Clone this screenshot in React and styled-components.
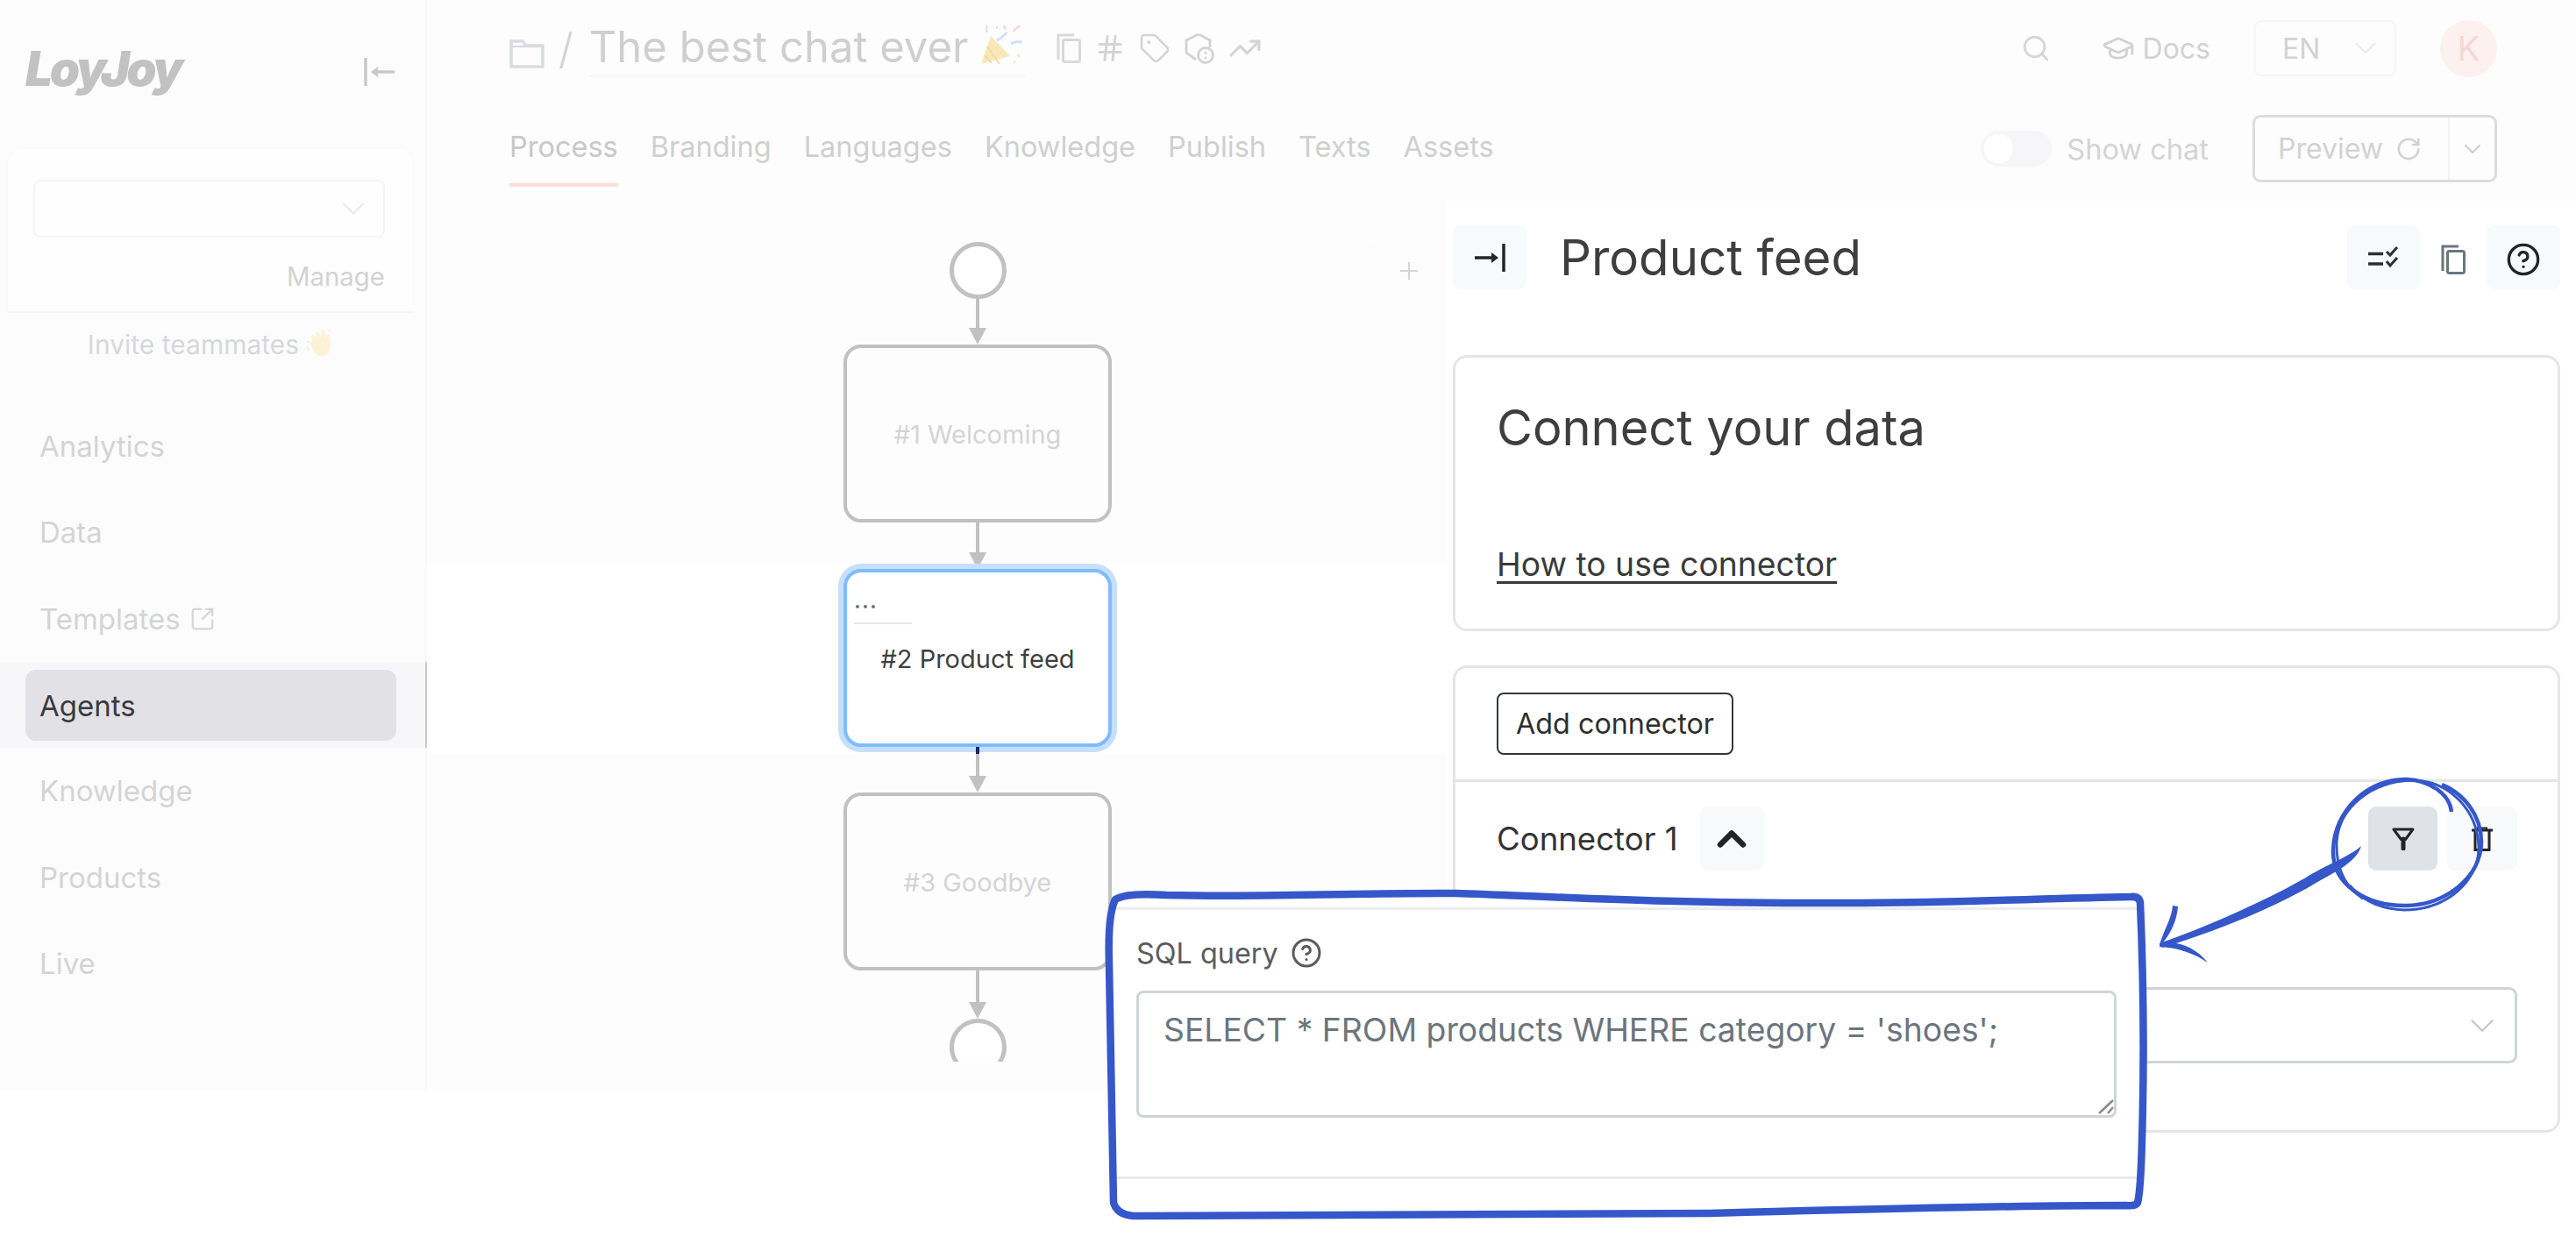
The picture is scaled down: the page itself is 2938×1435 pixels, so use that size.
import React from "react";
import styled, { createGlobalStyle } from "styled-components";
import { Search, GraduationCap, RotateCw, CircleHelp, ChevronDown, ChevronUp, Hash, Tag, TrendingUp, SquareArrowOutUpRight, Plus } from "lucide-react";

const Global = createGlobalStyle`
  html, body { margin: 0; padding: 0; background: #fff; }
  body { font-family: "Inter", "Noto Sans", sans-serif; }
  * { box-sizing: border-box; }
`;

const Page = styled.div`
  position: relative; width: 2938px; height: 1435px; display: flex; overflow: hidden; background: #fff;
`;
const Sidebar = styled.aside`
  width: 487px; height: 1245px; flex: none; background: #fcfcfd; border-right: 2px solid #f8f8f9;
  display: flex; flex-direction: column;
`;
const LogoRow = styled.div`
  height: 169px; display: flex; align-items: flex-start; justify-content: space-between; padding: 48px 34px 0 29px;
`;
const Logo = styled.div`
  font: italic 900 55px/60px "Inter", sans-serif; letter-spacing: -3.4px; color: #c2c2c2;
`;
const CollapseBtn = styled.div` margin-top: 17px; display: flex; `;
const WorkspaceCard = styled.div`
  margin: 0 13px 0 8px; height: 188px; padding: 35px 32px 0 29px; background: #fefefe;
  border: 1px solid #fafafa; border-radius: 18px 18px 0 0; border-bottom: 2px solid #f6f6f6;
`;
const WorkspaceSelect = styled.div`
  height: 66px; border: 2px solid #f5f5f6; border-radius: 8px; display: flex; align-items: center; justify-content: flex-end; padding-right: 12px; color: #e8e8ea;
`;
const ManageLink = styled.div`
  margin-top: 25px; text-align: right; font-size: 29.4px; line-height: 40px; color: #d2d2d2;
`;
const InviteRow = styled.div`
  margin: 0 13px 0 8px; height: 92px; padding-top: 16px; display: flex; justify-content: center; align-items: flex-start; gap: 8px;
  font-size: 30px; line-height: 40px; color: #d6d8da; border-bottom: 1px solid #fafafa;
`;
const Nav = styled.nav` margin-top: 11px; display: flex; flex-direction: column; `;
const NavItem = styled.div`
  height: 98.3px; padding: ${p => (p.$active ? "9px 0 8px 29px" : "0 0 0 45px")}; margin-right: -2px;
  display: flex; align-items: center; gap: 10px; font-size: 33px; color: #d4d4d4;
  ${p => p.$active && "background: #f7f7f9; border-right: 2px solid #c9c9cd;"}
`;
const ActivePill = styled.div`
  width: 423px; height: 81px; background: #e2e2e6; border-radius: 12px; display: flex; align-items: center;
  padding-left: 16px; color: #3a3a3c; font-size: 33px;
`;
const Main = styled.main` flex: 1; display: flex; flex-direction: column; min-width: 0; `;
const Header = styled.header` height: 230px; flex: none; background: #fdfdfd; padding: 0 90px 0 94px; `;
const TopBar = styled.div` height: 110px; display: flex; align-items: center; justify-content: space-between; `;
const Breadcrumb = styled.div` display: flex; align-items: center; `;
const Slash = styled.span` font-size: 48px; color: #d2d2d2; margin: 0 18px 0 16px; font-weight: 300; `;
const ChatTitle = styled.div`
  display: flex; align-items: center; gap: 13px; height: 66px; border-bottom: 2px solid #f6f6f6;
  font-size: 49px; line-height: 60px; color: #cfcfcf; width: 497px; white-space: nowrap;
`;
const TitleTools = styled.div` display: flex; align-items: center; gap: 15px; margin-left: 36px; color: #d4d4d4; `;
const TopRight = styled.div` display: flex; align-items: center; gap: 50px; color: #d6d6d6; `;
const SearchWrap = styled.div` display: flex; margin-right: 8px; `;
const DocsLink = styled.div` display: flex; align-items: center; gap: 9px; font-size: 32px; color: #d2d2d2; `;
const LangSelect = styled.div`
  width: 162px; height: 64px; border: 2px solid #f6f6f7; border-radius: 8px; display: flex; align-items: center; justify-content: space-between;
  padding: 0 12px 0 30px; font-size: 32px; color: #d2d2d2;
`;
const Avatar = styled.div`
  width: 65px; height: 65px; border-radius: 50%; background: #fdf1ef; color: #f6d7d1; display: flex; align-items: center; justify-content: center; font-size: 38px;
`;
const TabsRow = styled.div` height: 120px; padding-top: 21px; display: flex; justify-content: space-between; align-items: flex-start; `;
const Tabs = styled.div` display: flex; gap: 37px; margin-top: 17px; `;
const Tab = styled.div`
  height: 65px; padding-bottom: 21px; font-size: 32.5px; line-height: 40px; color: ${p => (p.$active ? "#c8c8c8" : "#cfcfcf")}; white-space: nowrap;
  border-bottom: 4px solid ${p => (p.$active ? "#ffdcd5" : "transparent")};
`;
const TabsRight = styled.div` display: flex; align-items: center; height: 77px; `;
const Toggle = styled.div`
  width: 81px; height: 41px; border-radius: 21px; background: #f6f6f8; padding: 4px; margin-right: 17px;
`;
const ToggleKnob = styled.div` width: 33px; height: 33px; border-radius: 50%; background: #fff; `;
const ToggleLabel = styled.span` font-size: 32.6px; color: #d4d4d4; margin-right: 50px; `;
const PreviewGroup = styled.div`
  width: 279px; height: 77px; border: 3px solid #dcdcdc; border-radius: 9px; display: flex; align-items: stretch; background: #fdfdfd;
`;
const PreviewBtn = styled.div`
  width: 222px; display: flex; align-items: center; gap: 14px; padding-left: 26px; font-size: 32px; color: #d2d2d2; border-right: 2px solid #f3f3f3;
`;
const PreviewCaret = styled.div` flex: 1; display: flex; align-items: center; justify-content: center; color: #cfcfcf; `;
const Workspace = styled.div` flex: 1; display: flex; min-height: 0; `;
const Canvas = styled.div`
  position: relative; width: 1163px; height: 1015px; flex: none; padding: 46px 0 0 463px; overflow: hidden;
  background: linear-gradient(#fdfdfd 0 413px, #fff 413px 629px, #fdfdfd 629px);
`;
const CanvasInner = styled.div` width: 330px; height: 943px; overflow: hidden; display: flex; flex-direction: column; align-items: center; padding-top: 8px; margin-top: -8px; `;
const EventCircle = styled.div` width: 65px; height: 65px; flex: none; border: 5px solid #c1c1c1; border-radius: 50%; background: #fff; `;
const EdgeSvg = styled.svg` display: block; flex: none; overflow: visible; `;
const Node = styled.div`
  width: 306px; height: 203px; flex: none; border-radius: 20px; border: 4px solid ${p => (p.$selected ? "#7fbcff" : "#c1c1c1")};
  background: ${p => (p.$selected ? "#fff" : "#fdfdfd")};
  ${p => p.$selected && "box-shadow: 0 0 0 6px #c6dfff;"}
  display: flex; flex-direction: column; align-items: center; justify-content: center; padding-top: ${p => (p.$selected ? 0 : 2)}px;
  font-size: 29px; color: ${p => (p.$selected ? "#3f3f3f" : "#d4d4d4")}; white-space: nowrap;
`;
const NodeTools = styled.div`
  align-self: flex-start; width: 66px; margin-left: 8px; height: 24px; border-bottom: 2px solid #e2e5ea; display: flex; gap: 5px; padding: 2px 2px 0; margin-top: -44px; margin-bottom: 22px; align-items: flex-start;
`;
const NodeDot = styled.i` width: 4px; height: 4px; border-radius: 50%; background: #6c757d; display: block; `;
const AddStep = styled.div`
  position: absolute; right: 10px; top: 47px; width: 76px; height: 63px; background: #fcfcfc; color: #d6d6d6; display: flex; align-items: center; justify-content: center; padding-left: 10px;
`;
const Panel = styled.section` flex: 1; min-width: 0; padding: 27px 18px 0 7px; background: #fff; `;
const PanelHead = styled.div` height: 73px; display: flex; align-items: center; `;
const IconBtn = styled.div`
  width: ${p => p.$w || 84}px; height: 73px; flex: none; border-radius: 9px; background: ${p => p.$bg || "#f8f9fa"}; display: flex; align-items: center; justify-content: center; color: #212529; padding-top: ${p => p.$drop || 0}px;
`;
const PanelTitle = styled.h1` margin: 0 0 0 38px; font-size: 56.4px; font-weight: 400; color: #3e3e3e; white-space: nowrap; `;
const PanelTools = styled.div` margin-left: auto; display: flex; align-items: center; gap: 24px; `;
const PlainIcon = styled.div` display: flex; color: #6c757d; margin-top: 4px; `;
const Card = styled.div` border: 3px solid #e5e5e5; border-radius: 16px; background: #fff; `;
const IntroCard = styled(Card)` margin-top: 75px; height: 315px; padding: 50px 47px 0; `;
const IntroTitle = styled.h2` margin: 0; font-size: 56px; line-height: 60px; font-weight: 400; color: #3e3e3e; `;
const HelpLink = styled.a` display: block; margin-top: 102px; font-size: 37.3px; line-height: 48px; color: #3a3a3a; text-decoration: underline; text-underline-offset: 6px; `;
const ConnectorCard = styled(Card)` margin-top: 39px; height: 533px; `;
const AddRow = styled.div` height: 130px; padding: 28px 47px 0; border-bottom: 3px solid #e5e5e5; `;
const OutlineBtn = styled.div`
  width: 270px; height: 71px; border: 2px solid #33373b; border-radius: 8px; display: flex; align-items: center; justify-content: center; font-size: 32.3px; color: #2e2e2e;
`;
const ConnectorRow = styled.div` margin-top: 28px; padding: 0 46px 0 47px; display: flex; align-items: center; `;
const ConnectorName = styled.span` font-size: 36.6px; color: #333; margin-right: 25px; `;
const RowTools = styled.div` margin-left: auto; display: flex; gap: 11px; `;
const FieldSelect = styled.div`
  margin: 133px 46px 0 47px; height: 87px; border: 3px solid #ced4da; border-radius: 9px; display: flex; align-items: center; justify-content: flex-end; padding-right: 14px; color: #c4c8ce;
`;
const SnippetCard = styled.div`
  position: absolute; left: 1270px; top: 1020px; width: 1172px; height: 366px; background: #fff; padding-top: 15px;
`;
const SnippetInner = styled.div`
  height: 310px; border-top: 3px solid #ececee; border-bottom: 3px solid #e9e9ec; padding: 29px 26px 0;
`;
const SnippetLabel = styled.label` height: 40px; display: flex; align-items: center; gap: 14px; font-size: 32.4px; color: #5b5b5b; `;
const SqlArea = styled.textarea`
  display: block; width: 1118px; height: 145px; margin-top: 23px; border: 3px solid #ced4da; border-radius: 8px; padding: 20px 28px 0; resize: none; outline: none;
  font: 400 37.3px/44px "Inter", sans-serif; color: #6c757d; background: #fff;
`;
const Annotation = styled.svg` position: absolute; left: 0; top: 0; pointer-events: none; `;

const Collapse = ({ color, flip }) => (
  <svg width="36" height="34" viewBox="0 0 36 34" style={flip ? { transform: "scaleX(-1)" } : undefined}>
    <path d="M2 1v32" stroke={color} strokeWidth="3.5" />
    <path d="M11 17h24" stroke={color} strokeWidth="3.5" />
    <path d="M8 17l8-6v12z" fill={color} />
  </svg>
);
const Folder = () => (
  <svg width="40" height="35" viewBox="0 0 40 35" fill="none" stroke="#d9dcdf" strokeWidth="3.5" style={{ marginTop: 12 }}>
    <path d="M2 32V3h13l4 5h19v24z" />
    <path d="M2 9h36" strokeWidth="2.5" />
  </svg>
);
const CopyIcon = ({ color, w = 28, h = 34 }) => (
  <svg width={w} height={h} viewBox="0 0 28 34" fill="none" stroke={color} strokeWidth="3">
    <path d="M2 30V2h18" />
    <rect x="7.5" y="7.5" width="19" height="25" rx="2" />
  </svg>
);
const ShieldClock = () => (
  <svg width="36" height="36" viewBox="0 0 36 36" fill="none" stroke="#d4d4d4" strokeWidth="3">
    <path d="M17 2l13 7v8M17 2L3 9v14l11 8" />
    <circle cx="25" cy="26" r="8.5" fill="#fdfdfd" />
    <circle cx="25" cy="23.5" r="1.5" fill="#d4d4d4" stroke="none" />
    <circle cx="25" cy="29" r="1.5" fill="#d4d4d4" stroke="none" />
  </svg>
);
const Popper = () => (
  <svg width="50" height="50" viewBox="0 0 50 50" fill="none" style={{ flex: "none", marginTop: -6 }}>
    <path d="M2 47L13 15l22 23z" fill="#f8e7b8" />
    <path d="M9 27l14 20M6 37l8 9" stroke="#f3d9a4" strokeWidth="2" />
    <path d="M20 20c8-3 10-9 12-9M36 24c3-2 8-3 13-2" stroke="#cfe2f6" strokeWidth="3" />
    <path d="M8 3c3 3-2 5 1 8M28 3l2 5M46 3c-2 4-6 2-7 7" stroke="#f7c9d6" strokeWidth="1.8" />
    <path d="M20 4v3M44 36l1 3M40 44v2" stroke="#f7dcc0" strokeWidth="2" />
  </svg>
);
const Wave = () => (
  <svg width="31" height="32" viewBox="0 0 31 32" fill="none" style={{ flex: "none", marginTop: 2 }}>
    <path d="M7 17L6 9c0-2 3-2 4 0l2 5-1-9c0-2 3-2 4 0l2 7V3c1-2 4-2 4 0l1 9 1-5c1-2 4-1 4 1l1 12c0 7-4 11-10 11-5 0-7-2-9-6l-4-8c-1-2 1-3 3-1z" fill="#fdf1d6" />
    <path d="M1 20l2 5M2 14l1 2M26 1l2 2" stroke="#e8e8e8" strokeWidth="1.5" />
  </svg>
);
const ChecksIcon = () => (
  <svg width="36" height="26" viewBox="0 0 36 26" fill="none" stroke="#2b2f33">
    <path d="M0 8.5h17M0 20h17" strokeWidth="3.5" />
    <path d="M21 6l4 4 8-9M21 17l4 5 8-9" strokeWidth="3" />
  </svg>
);
const FunnelIcon = () => (
  <svg width="26" height="26" viewBox="0 0 26 26" fill="none" stroke="#212529" strokeWidth="3">
    <path d="M2 2h22l-8.5 11.5h-5z" strokeLinejoin="round" />
    <path d="M13 13v11" strokeWidth="5" strokeLinecap="round" />
  </svg>
);
const TrashIcon = () => (
  <svg width="24" height="28" viewBox="0 0 24 28" fill="none" stroke="#212529" strokeWidth="3">
    <path d="M0 4h24" />
    <path d="M7 4V1.5h10V4" strokeWidth="2" />
    <path d="M4 4v22.5h16V4" />
  </svg>
);
const Arrow = ({ height, dark }) => (
  <EdgeSvg width="20" height={height} viewBox={`0 0 20 ${height}`}>
    <path d={`M10 0V${height - 16}`} stroke="#c1c1c1" strokeWidth="4" />
    <path d={`M0 ${height - 19}h20l-10 19z`} fill="#c1c1c1" />
    {dark === "top" && <path d={`M8 0h4v8h-4z`} fill="#0b2a5e" />}
    {dark === "tip" && <path d={`M7 ${height - 6}h6l-3 6z`} fill="#0b2a5e" />}
  </EdgeSvg>
);

const blue = "#3557c9";

export default function App() {
  return (
    <Page>
      <Global />
      <Sidebar>
        <LogoRow>
          <Logo>LoyJoy</Logo>
          <CollapseBtn><Collapse color="#c8c8c8" /></CollapseBtn>
        </LogoRow>
        <WorkspaceCard>
          <WorkspaceSelect><ChevronDown size={44} strokeWidth={1} /></WorkspaceSelect>
          <ManageLink>Manage</ManageLink>
        </WorkspaceCard>
        <InviteRow>Invite teammates <Wave /></InviteRow>
        <Nav>
          <NavItem>Analytics</NavItem>
          <NavItem>Data</NavItem>
          <NavItem>Templates <SquareArrowOutUpRight size={30} strokeWidth={1.8} color="#d6d6d6" /></NavItem>
          <NavItem $active><ActivePill>Agents</ActivePill></NavItem>
          <NavItem>Knowledge</NavItem>
          <NavItem>Products</NavItem>
          <NavItem>Live</NavItem>
        </Nav>
      </Sidebar>
      <Main>
        <Header>
          <TopBar>
            <Breadcrumb>
              <Folder />
              <Slash>/</Slash>
              <ChatTitle>The best chat ever <Popper /></ChatTitle>
              <TitleTools>
                <CopyIcon color="#d8d8d8" />
                <Hash size={36} strokeWidth={2} />
                <Tag size={36} strokeWidth={1.7} />
                <ShieldClock />
                <TrendingUp size={38} strokeWidth={2} />
              </TitleTools>
            </Breadcrumb>
            <TopRight>
              <SearchWrap><Search size={34} strokeWidth={2} /></SearchWrap>
              <DocsLink><GraduationCap size={38} strokeWidth={1.8} />Docs</DocsLink>
              <LangSelect>EN<ChevronDown size={42} strokeWidth={1} color="#e4e4e4" /></LangSelect>
              <Avatar>K</Avatar>
            </TopRight>
          </TopBar>
          <TabsRow>
            <Tabs>
              <Tab $active>Process</Tab>
              <Tab>Branding</Tab>
              <Tab>Languages</Tab>
              <Tab>Knowledge</Tab>
              <Tab>Publish</Tab>
              <Tab>Texts</Tab>
              <Tab>Assets</Tab>
            </Tabs>
            <TabsRight>
              <Toggle><ToggleKnob /></Toggle>
              <ToggleLabel>Show chat</ToggleLabel>
              <PreviewGroup>
                <PreviewBtn>Preview <RotateCw size={30} strokeWidth={2} /></PreviewBtn>
                <PreviewCaret><ChevronDown size={32} strokeWidth={1.6} /></PreviewCaret>
              </PreviewGroup>
            </TabsRight>
          </TabsRow>
        </Header>
        <Workspace>
          <Canvas>
            <CanvasInner>
              <EventCircle />
              <Arrow height={52} />
              <Node>#1 Welcoming</Node>
              <Arrow height={53} dark="tip" />
              <Node $selected>
                <NodeTools><NodeDot /><NodeDot /><NodeDot /></NodeTools>
                #2 Product feed
              </Node>
              <Arrow height={52} dark="top" />
              <Node>#3 Goodbye</Node>
              <Arrow height={55} />
              <EventCircle />
            </CanvasInner>
            <AddStep><Plus size={32} strokeWidth={1.6} /></AddStep>
          </Canvas>
          <Panel>
            <PanelHead>
              <IconBtn $w={84}><Collapse color="#212529" flip /></IconBtn>
              <PanelTitle>Product feed</PanelTitle>
              <PanelTools>
                <IconBtn $w={83}><ChecksIcon /></IconBtn>
                <PlainIcon><CopyIcon color="#6c757d" /></PlainIcon>
                <IconBtn $w={84} $drop={4}><CircleHelp size={40} strokeWidth={2} /></IconBtn>
              </PanelTools>
            </PanelHead>
            <IntroCard>
              <IntroTitle>Connect your data</IntroTitle>
              <HelpLink>How to use connector</HelpLink>
            </IntroCard>
            <ConnectorCard>
              <AddRow><OutlineBtn>Add connector</OutlineBtn></AddRow>
              <ConnectorRow>
                <ConnectorName>Connector 1</ConnectorName>
                <IconBtn $w={73}><ChevronUp size={52} strokeWidth={3} /></IconBtn>
                <RowTools>
                  <IconBtn $w={79} $bg="#dfe2e6"><FunnelIcon /></IconBtn>
                  <IconBtn $w={80}><TrashIcon /></IconBtn>
                </RowTools>
              </ConnectorRow>
              <FieldSelect><ChevronDown size={46} strokeWidth={1.2} /></FieldSelect>
            </ConnectorCard>
          </Panel>
        </Workspace>
      </Main>
      <SnippetCard>
        <SnippetInner>
          <SnippetLabel>SQL query <CircleHelp size={36} strokeWidth={2} color="#5b5b5b" /></SnippetLabel>
          <SqlArea readOnly value="SELECT * FROM products WHERE category = 'shoes';" />
        </SnippetInner>
      </SnippetCard>
      <Annotation width="2938" height="1435" viewBox="0 0 2938 1435" fill="none">
        <path d="M2394 1270L2410 1255M2404 1270L2410 1263" stroke="#8a8a8a" strokeWidth="2.5" />
        <path
          d="M1272 1026Q1285 1018 1330 1021C1450 1024 1560 1018 1660 1019C1760 1022 1900 1031 2090 1030C2200 1031 2320 1025 2430 1023Q2440 1022 2441 1030C2444 1100 2446 1200 2443 1300C2442 1340 2441 1360 2438 1372Q2436 1376 2425 1375C2300 1375 2100 1380 1950 1384C1700 1385 1500 1385 1300 1387Q1275 1388 1270 1372C1268 1300 1266 1200 1265 1100C1264 1070 1265 1040 1272 1026Z"
          stroke={blue} strokeWidth="8.5" strokeLinejoin="round"
        />
        <path d="M2796 926C2794 905 2770 890 2745 889C2700 888 2662 925 2661 970C2660 1010 2700 1034 2745 1033C2790 1032 2830 1000 2830 960C2830 930 2810 905 2785 895" stroke={blue} strokeWidth="4.5" />
        <path d="M2695 1025C2675 1012 2664 990 2665 960C2668 920 2705 892 2750 890C2795 890 2825 925 2827 965C2828 1005 2790 1038 2742 1038C2715 1037 2695 1028 2680 1010" stroke={blue} strokeWidth="3" />
        <path d="M2693 965C2680 977 2650 988 2630 1001C2590 1024 2530 1052 2463 1076L2466 1081C2530 1062 2600 1032 2640 1008C2660 996 2688 984 2693 965Z" fill={blue} />
        <path d="M2478 1033L2484 1034C2483 1050 2475 1066 2467 1075L2463 1078C2468 1060 2477 1048 2478 1033Z" fill={blue} />
        <path d="M2463 1076C2485 1072 2505 1082 2518 1098C2503 1088 2485 1081 2463 1080Z" fill={blue} />
      </Annotation>
    </Page>
  );
}
